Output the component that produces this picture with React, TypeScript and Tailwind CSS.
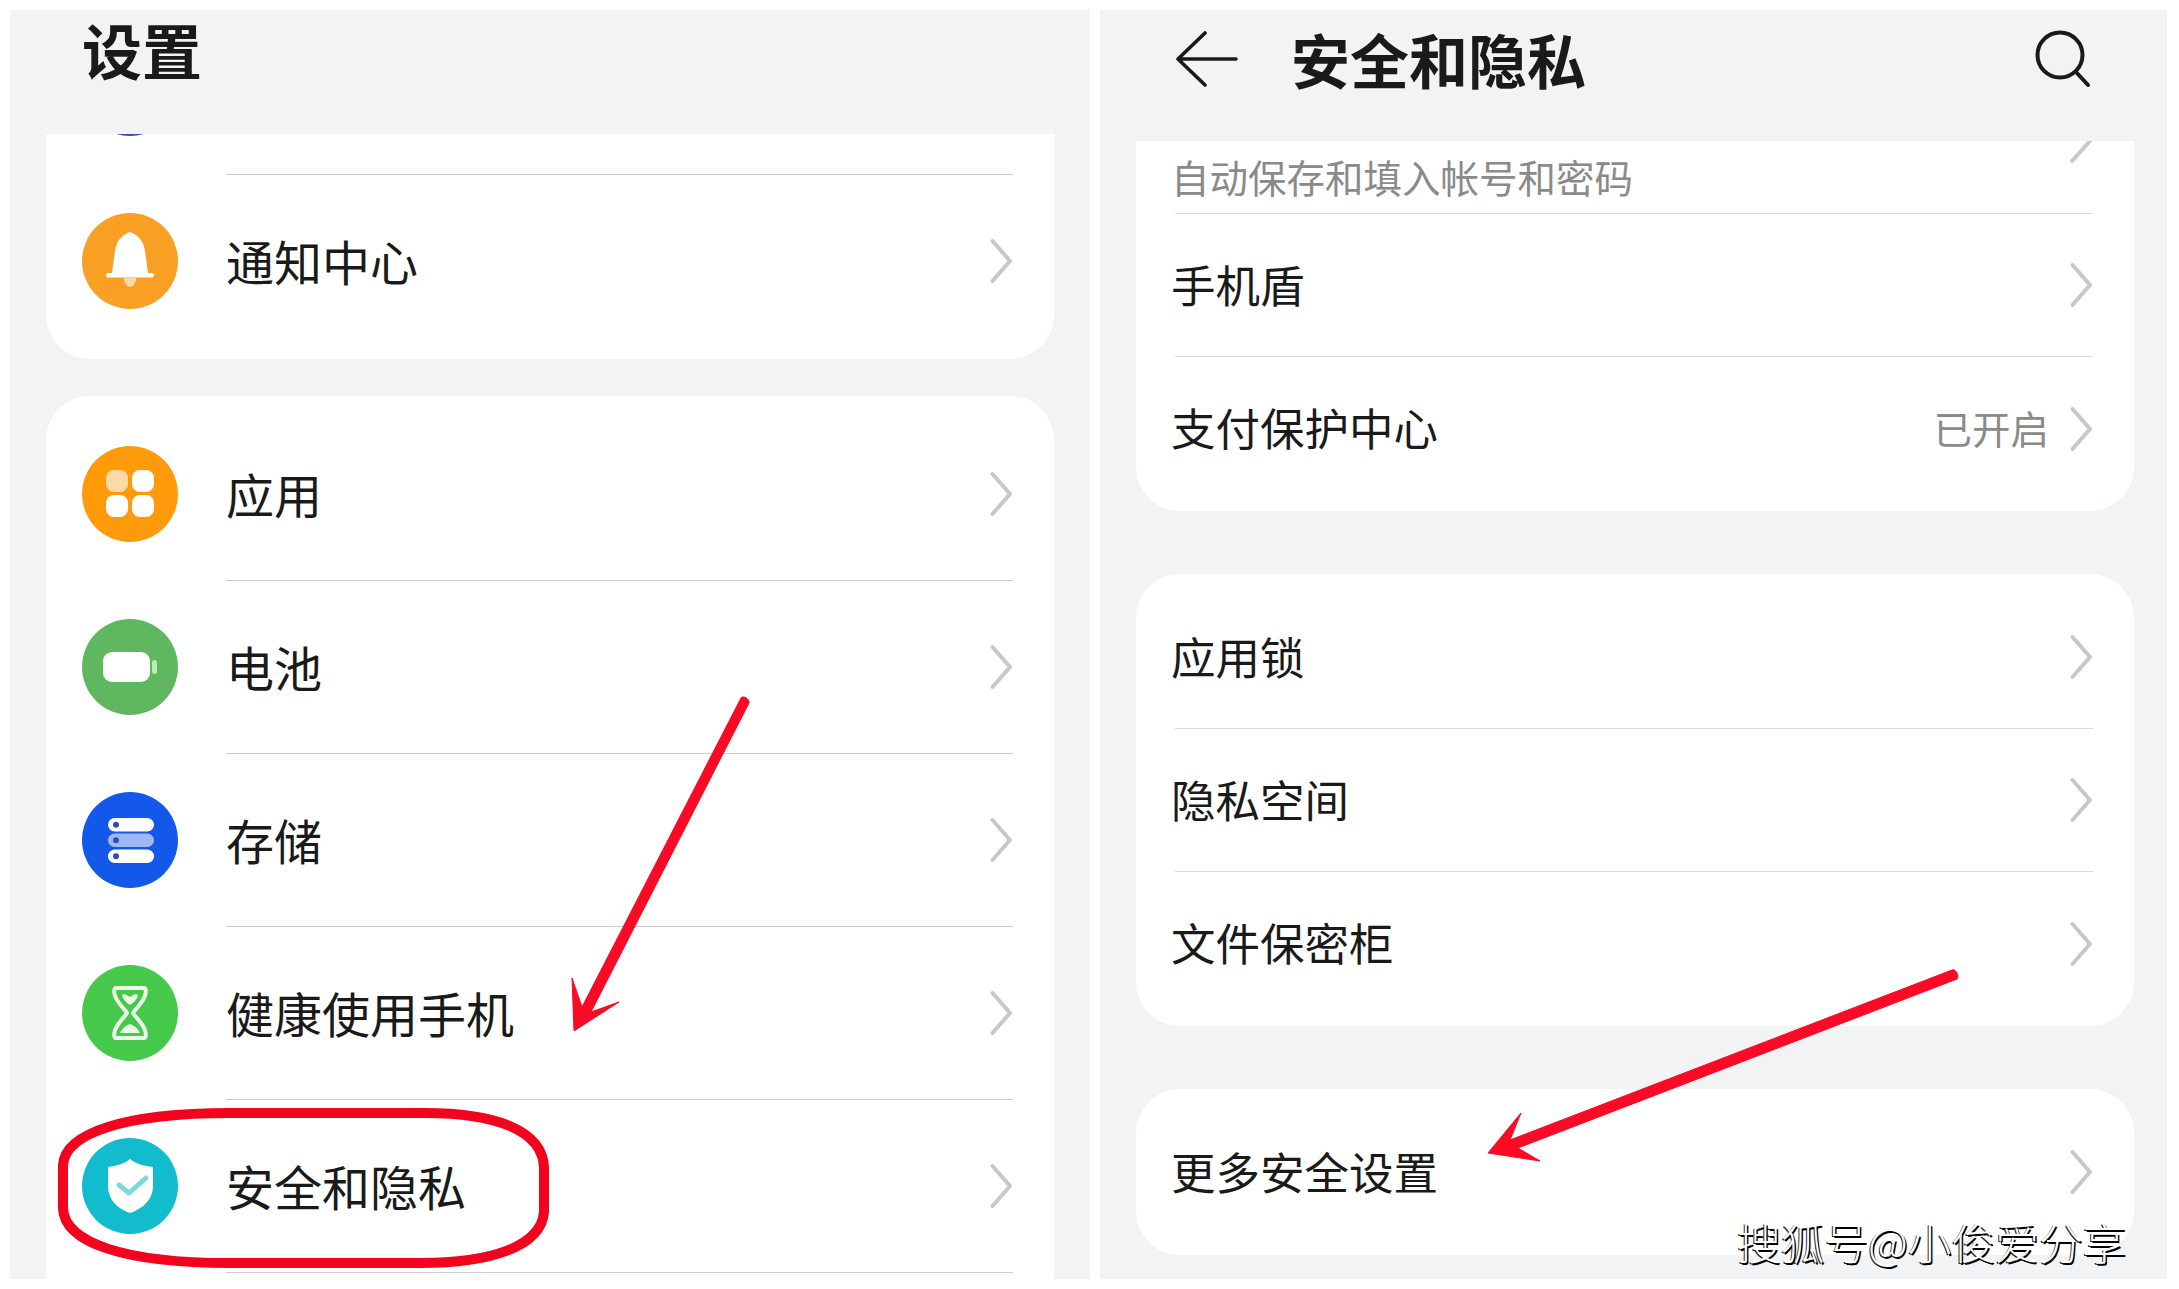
import React from "react";

function Chevron() {
  return (
    <svg width="24" height="46" viewBox="0 0 24 46" className="shrink-0" fill="none">
      <path d="M3.5 3 L21 23 L3.5 43" stroke="#c8c8c8" strokeWidth="4" strokeLinecap="round" strokeLinejoin="round" />
    </svg>
  );
}

function Circle({ color, children }: { color: string; children: React.ReactNode }) {
  return (
    <svg width="96" height="96" viewBox="0 0 96 96" className="shrink-0 -translate-y-[1px]">
      <circle cx="48" cy="48" r="48" fill={color} />
      {children}
    </svg>
  );
}

const BellIcon = (
  <Circle color="#f9a024">
    <path d="M48 19 C41 21 34 28 33 38 L30 60 L66 60 L63 38 C62 28 55 21 48 19 Z" fill="#fff" />
    <rect x="24" y="60" width="48" height="4.5" rx="2.2" fill="#fff" />
    <path d="M42 65 L54 65 C54 70 51 74 48 74 C45 74 42 70 42 65 Z" fill="#fcd9a6" />
  </Circle>
);
const AppsIcon = (
  <Circle color="#ff9a0a">
    <rect x="24" y="24" width="22" height="22" rx="8" fill="#fdd9a8" />
    <rect x="50" y="24" width="22" height="22" rx="8" fill="#fff" />
    <rect x="24" y="49" width="22" height="22" rx="8" fill="#fff" />
    <rect x="50" y="49" width="22" height="22" rx="8" fill="#fff" />
  </Circle>
);
const BatteryIcon = (
  <Circle color="#5fb85f">
    <rect x="21" y="33" width="47" height="30" rx="9" fill="#fff" />
    <rect x="70" y="41" width="5" height="14" rx="2.5" fill="#b5f0b0" />
  </Circle>
);
const StorageIcon = (
  <Circle color="#1458ea">
    <rect x="26" y="26" width="46" height="13.5" rx="6.7" fill="#fff" />
    <rect x="26" y="41.5" width="46" height="13.5" rx="6.7" fill="#9db8f5" />
    <rect x="26" y="57.5" width="46" height="13.5" rx="6.7" fill="#fff" />
    <circle cx="34" cy="32.7" r="3" fill="#2a4fb0" />
    <circle cx="34" cy="48.2" r="3" fill="#2a4fb0" />
    <circle cx="34" cy="64.2" r="3" fill="#2a4fb0" />
  </Circle>
);
const HourglassIcon = (
  <Circle color="#46c94a">
    <path
      d="M34 23 L62 23 C64 23 64 26 63.5 29 C62 37 54 43 51 48 C54 53 62 59 63.5 67 C64 70 64 73 62 73 L34 73 C32 73 32 70 32.5 67 C34 59 42 53 45 48 C42 43 34 37 32.5 29 C32 26 32 23 34 23 Z"
      fill="none"
      stroke="#e9fbe5"
      strokeWidth="4"
      strokeLinejoin="round"
    />
    <path d="M40 30 C43 28 46 31 48 32 C50 31 53 28 56 30 C55 35 51 38 48 40 C45 38 41 35 40 30 Z" fill="#e9fbe5" />
    <path d="M38 68 C41 62 45 60 48 59 C51 60 55 62 58 68 Z" fill="#e9fbe5" />
  </Circle>
);
const ShieldIcon = (
  <Circle color="#12bccc">
    <path d="M48 21 C54 26 62 28 71 29 L71 48 C71 62 60 71 48 75 C36 71 26 62 26 48 L26 29 C34 28 42 26 48 21 Z" fill="#fff" />
    <path d="M37 47 L47 55 L64 40" fill="none" stroke="#7fd8dc" strokeWidth="5" strokeLinecap="round" strokeLinejoin="round" />
  </Circle>
);

function IconRow({ icon, label, last }: { icon: React.ReactNode; label: string; last?: boolean }) {
  return (
    <div className="flex h-[173px] items-center pl-[36px] pr-[41px]">
      {icon}
      <div className={`ml-[48px] flex h-full flex-1 items-center justify-between ${last ? "" : "border-b border-[#cdcdcd]"}`}>
        <span className={`${last ? "pb-[4px]" : "pb-[2px]"} text-[48px] leading-none text-[#1a1a1a]`}>{label}</span>
        <span className={last ? "pb-[2px]" : ""}>
          <Chevron />
        </span>
      </div>
    </div>
  );
}

function PlainRow({ label, value, last }: { label: string; value?: string; last?: boolean }) {
  return (
    <div className="flex h-[143px] items-center pl-[39px] pr-[41px]">
      <div className={`flex h-full flex-1 items-center justify-between ${last ? "" : "border-b border-[#dcdcdc]"}`}>
        <span className="-ml-[4px] pb-[2px] text-[44.5px] leading-none text-[#1a1a1a]">{label}</span>
        <span className="flex items-center gap-[20px]">
          {value ? <span className="pb-[2px] text-[38.5px] leading-none text-[#8a8a8a]">{value}</span> : null}
          <Chevron />
        </span>
      </div>
    </div>
  );
}

export default function App() {
  return (
    <div className="relative h-[1289px] w-[2179px] bg-white font-['Noto_Sans_CJK_SC','Liberation_Sans',sans-serif]">
      <div className="flex h-[1279px] gap-[10px] pl-[10px] pr-[12px] pt-[10px]">
        {/* Left panel */}
        <div className="flex h-full w-[1080px] flex-col bg-[#f1f3f5]">
          <div className="flex h-[124px] shrink-0 items-center pb-[46px] pl-[72px]">
            <span className="text-[60px] font-bold leading-[76px] text-[#1a1a1a]">设置</span>
          </div>
          <div className="mx-[36px] shrink-0 overflow-hidden rounded-b-[44px] bg-white pb-[11px]">
            <div className="flex h-[41px] pl-[36px] pr-[41px]">
              <div className="-mt-[94px] h-[96px] w-[96px] shrink-0 rounded-full bg-[#3f4aa8]" />
              <div className="ml-[48px] flex-1 border-b border-[#cdcdcd]" />
            </div>
            <IconRow icon={BellIcon} label="通知中心" last />
          </div>
          <div className="mx-[36px] mt-[37px] flex-1 overflow-hidden rounded-t-[44px] bg-white pt-[12px]">
            <IconRow icon={AppsIcon} label="应用" />
            <IconRow icon={BatteryIcon} label="电池" />
            <IconRow icon={StorageIcon} label="存储" />
            <IconRow icon={HourglassIcon} label="健康使用手机" />
            <IconRow icon={ShieldIcon} label="安全和隐私" />
          </div>
        </div>

        {/* Right panel */}
        <div className="flex h-full flex-1 flex-col bg-[#f1f3f5]">
          <div className="flex h-[131px] shrink-0 items-center pb-[34px] pl-[76px] pr-[76px]">
            <svg width="62" height="56" viewBox="0 0 62 56" fill="none" className="shrink-0">
              <path d="M29 2 L2 28 L29 54 M2 28 L60 28" stroke="#1a1a1a" strokeWidth="3.6" strokeLinecap="round" strokeLinejoin="round" />
            </svg>
            <span className="ml-[53px] flex-1 text-[59px] font-bold leading-[76px] text-[#1a1a1a]">安全和隐私</span>
            <svg width="56" height="58" viewBox="0 0 56 58" fill="none" className="shrink-0">
              <circle cx="25" cy="25" r="22.5" stroke="#1a1a1a" strokeWidth="4" />
              <path d="M41 42 L53 55" stroke="#1a1a1a" strokeWidth="4" strokeLinecap="round" />
            </svg>
          </div>
          <div className="ml-[36px] mr-[33px] shrink-0 overflow-hidden rounded-b-[44px] bg-white pb-[11px]">
            <div className="ml-[39px] mr-[41px] flex h-[73px] justify-between border-b border-[#dcdcdc]">
              <span className="-ml-[4px] self-end pb-[18px] text-[38.5px] leading-none text-[#8a8a8a]">自动保存和填入帐号和密码</span>
              <svg width="24" height="22" viewBox="0 0 24 22" fill="none" className="shrink-0">
                <path d="M21 0 L3 20" stroke="#c8c8c8" strokeWidth="4" strokeLinecap="round" />
              </svg>
            </div>
            <PlainRow label="手机盾" />
            <PlainRow label="支付保护中心" value="已开启" last />
          </div>
          <div className="ml-[36px] mr-[33px] mt-[63px] shrink-0 rounded-[44px] bg-white pb-[11px] pt-[12px]">
            <PlainRow label="应用锁" />
            <PlainRow label="隐私空间" />
            <PlainRow label="文件保密柜" last />
          </div>
          <div className="ml-[36px] mr-[33px] mt-[63px] flex h-[166px] shrink-0 items-center rounded-[44px] bg-white">
            <div className="flex-1">
              <PlainRow label="更多安全设置" last />
            </div>
          </div>
        </div>
      </div>

      {/* Red annotations drawn on top of the screenshot */}
      <svg className="pointer-events-none absolute left-0 top-0" width="2179" height="1289" viewBox="0 0 2179 1289" fill="none">
        <path
          d="M230 1113 L425 1113 C495 1113 543 1130 544 1168 L544 1212 C541 1247 490 1263 420 1263 L230 1263 C125 1263 64 1243 63 1208 L63 1165 C65 1133 125 1113 230 1113 Z"
          stroke="#f2041f"
          strokeWidth="10"
        />
        <path d="M741 698 C743 695 750 699 749 703 L591 1012 L619 1002 L574 1031 L572 978 L582 1007 Z" fill="#fa0a25" stroke="#fa0a25" strokeWidth="1" strokeLinejoin="round" />
        <path d="M1952 970 C1955 968 1960 976 1957 979 L1518 1148 L1540 1161 L1488 1153 L1521 1113 L1510 1140 Z" fill="#fa0a25" stroke="#fa0a25" strokeWidth="1" strokeLinejoin="round" />
      </svg>

      {/* Watermark */}
      <span className="absolute left-[1737px] top-[1217px] whitespace-nowrap text-[43.7px] font-light leading-[48px] text-white [text-shadow:1.5px_1.5px_0_#000,-1px_1px_0_#222]">
        搜狐号@小俊爱分享
      </span>
    </div>
  );
}
